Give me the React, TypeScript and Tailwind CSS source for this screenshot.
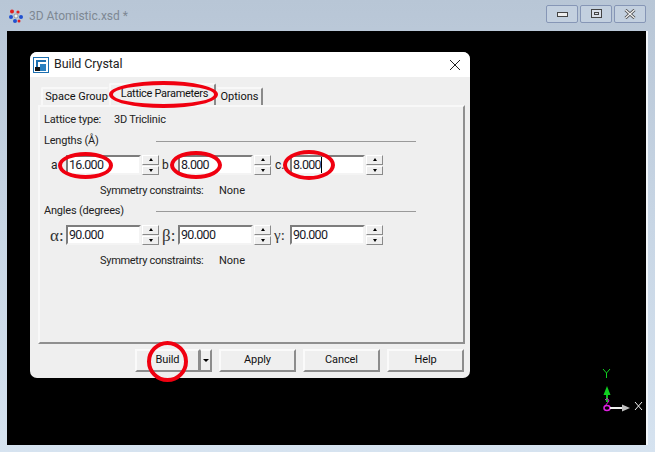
const font = "font-['Roboto','Liberation_Sans',Arial,sans-serif]";

function Spinner() {
  return (
    <div className="flex flex-col w-[17px] h-5 gap-px shrink-0 ml-px">
      <div className="flex-1 bg-[#efefef] border border-t-white border-l-white border-r-[#8a8a8a] border-b-[#8a8a8a] flex items-center justify-center">
        <div className="w-0 h-0 border-x-[2.5px] border-x-transparent border-b-[3px] border-b-black" />
      </div>
      <div className="flex-1 bg-[#efefef] border border-t-white border-l-white border-r-[#8a8a8a] border-b-[#8a8a8a] flex items-center justify-center">
        <div className="w-0 h-0 border-x-[2.5px] border-x-transparent border-t-[3px] border-t-black" />
      </div>
    </div>
  );
}

function Field({ value, caret }: { value: string; caret?: boolean }) {
  return (
    <div className="w-[75px] h-[20px] bg-white border-2 border-t-[#7d7d7d] border-l-[#7d7d7d] border-r-[#f4f4f4] border-b-[#f4f4f4] flex items-center pl-[1px] font-['Roboto',sans-serif] text-[12.5px] tracking-[-0.7px] text-[#1a1a2a] shrink-0">
      <span className={caret ? "border-r border-black leading-[16px]" : "leading-[16px]"}>{value}</span>
    </div>
  );
}

function Group({ title }: { title: string }) {
  return (
    <div className="flex items-center h-[14px]">
      <span className="w-[112px] text-[11px] tracking-[-0.2px] text-[#222] whitespace-nowrap">{title}</span>
      <div className="w-[260px] h-px bg-[#9a9a9a]" />
    </div>
  );
}

function Constraints() {
  return (
    <div className="flex text-[11px] text-[#222] pl-[56px] h-[14px] items-center whitespace-nowrap">
      <span className="w-[119px] tracking-[-0.3px]">Symmetry constraints:</span>
      <span>None</span>
    </div>
  );
}

function Btn({ label, w = "w-[77px]" }: { label: string; w?: string }) {
  return (
    <div className={`${w} h-[23px] bg-[#efefef] border-2 border-t-[#fafafa] border-l-[#fafafa] border-r-[#8c8c8c] border-b-[#8c8c8c] flex items-center justify-center text-[11px] tracking-[-0.1px] text-[#111]`}>
      {label}
    </div>
  );
}

function Ring({ className }: { className: string }) {
  return <div className={`absolute rounded-[50%] border-[4px] border-[#f00010] ${className}`} />;
}

export default function App() {
  return (
    <div className={`${font} relative w-[655px] h-[452px] overflow-hidden flex flex-col bg-gradient-to-b from-[#b8c6d6] via-[#c8d6e5] to-[#d6e3f0]`}>
      {/* title bar */}
      <div className="h-[31px] flex items-center pl-[8px] pr-[9px] shrink-0">
        <svg width="16" height="16" viewBox="0 0 16 16" className="mr-[5px]">
          <circle cx="4" cy="3.5" r="2" fill="#e02020" />
          <circle cx="10" cy="4" r="1.6" fill="#e02020" />
          <circle cx="3" cy="9" r="2" fill="#2050d0" />
          <circle cx="8" cy="8" r="2" fill="#f0f0f0" stroke="#666" strokeWidth="0.5" />
          <circle cx="13" cy="9" r="2" fill="#2050d0" />
          <circle cx="7" cy="13" r="2" fill="#2050d0" />
          <circle cx="11" cy="13" r="1.5" fill="#e02020" />
        </svg>
        <span className="text-[12px] text-[#7e8893]">3D Atomistic.xsd *</span>
        <div className="ml-auto flex gap-[2px] mb-[4px]">
          <div className="w-[32px] h-[18px] rounded-[2px] border border-[#8696b6] bg-[#c3d0df] flex items-center justify-center">
            <div className="w-[11px] h-[5px] mt-[2px] bg-[#eeeeee] border border-[#444]" />
          </div>
          <div className="w-[32px] h-[18px] rounded-[2px] border border-[#8696b6] bg-[#c3d0df] flex items-center justify-center">
            <div className="w-[11px] h-[9px] bg-[#d8dee8] border border-[#444] flex items-center justify-center">
              <div className="w-[5px] h-[3px] border border-[#444]" />
            </div>
          </div>
          <div className="w-[32px] h-[18px] rounded-[2px] border border-[#8696b6] bg-[#c3d0df] flex items-center justify-center">
            <svg width="12" height="10" viewBox="0 0 12 10">
              <path d="M1.5 1 L10.5 9 M10.5 1 L1.5 9" stroke="#444" strokeWidth="3" />
              <path d="M1.5 1 L10.5 9 M10.5 1 L1.5 9" stroke="#f2f2f2" strokeWidth="1.4" />
            </svg>
          </div>
        </div>
      </div>

      {/* client area */}
      <div className="mx-[7px] mb-[7px] flex-1 bg-black border-r-2 border-r-[#f2f6fa] relative pt-[21px] pl-[23px]">
        {/* dialog */}
        <div className="w-[440px] h-[326px] rounded-[7px] overflow-hidden flex flex-col bg-[#efefef]">
          <div className="h-[25px] bg-white flex items-center pl-[3px] pr-[9px] shrink-0">
            <svg width="16" height="16" viewBox="0 0 16 16" className="mr-[5px]">
              <rect x="0.5" y="0.5" width="15" height="15" fill="#fff" stroke="#1d6fb0" />
              <path d="M3 14 V3 H13 V5 H5 V14 Z" fill="#1d6fb0" />
              <path d="M7 14 V7 H13 V14 Z" fill="#2a80c0" />
              <rect x="2" y="10" width="5" height="4" fill="#111" />
            </svg>
            <span className="text-[12.5px] tracking-[-0.1px] text-[#222]">Build Crystal</span>
            <svg width="12" height="12" viewBox="0 0 12 12" className="ml-auto">
              <path d="M1 1 L11 11 M11 1 L1 11" stroke="#222" strokeWidth="1" />
            </svg>
          </div>

          {/* tabs */}
          <div className="flex items-end pl-[11px] h-[28px] text-[11px] text-[#111] shrink-0 whitespace-nowrap">
            <div className="w-[68px] h-[18px] bg-[#efefef] border-2 border-b-0 border-t-[#f8f8f8] border-l-[#f8f8f8] border-r-[#efefef] rounded-t-[2px] flex items-center justify-center pl-[3px]">Space Group</div>
            <div className="w-[107px] h-[22px] bg-[#efefef] border-2 border-b-0 border-t-[#f8f8f8] border-l-[#f8f8f8] border-r-[#8a8a8a] rounded-t-[2px] flex items-center justify-center pb-[2px] pl-[4px] tracking-[-0.3px]">Lattice Parameters</div>
            <div className="w-[47px] h-[18px] bg-[#efefef] border-2 border-b-0 border-t-[#f8f8f8] border-r-[#8a8a8a] border-l-transparent rounded-t-[2px] flex items-center justify-center">Options</div>
          </div>

          {/* tab panel */}
          <div className="ml-[8px] mr-[5px] h-[239px] border-2 border-t-[#f8f8f8] border-l-[#f8f8f8] border-r-[#8f8f8f] border-b-[#8f8f8f] pl-[4px] pt-[6px] shrink-0">
            <div className="flex text-[11px] tracking-[-0.2px] text-[#222] h-[14px] items-center whitespace-nowrap">
              <span className="w-[70px]">Lattice type:</span>
              <span>3D Triclinic</span>
            </div>
            <div className="mt-[7px]">
              <Group title="Lengths (Å)" />
            </div>
            <div className="flex items-center h-[20px] mt-[7px] text-[12px] text-[#222]">
              <span className="w-[22px] pl-[7px] shrink-0">a</span>
              <Field value="16.000" />
              <Spinner />
              <span className="w-[19px] pl-[3px]">b</span>
              <Field value="8.000" />
              <Spinner />
              <span className="w-[19px] pl-[4px]">c.</span>
              <Field value="8.000" caret />
              <Spinner />
            </div>
            <div className="mt-[9px]">
              <Constraints />
            </div>
            <div className="mt-[6px]">
              <Group title="Angles (degrees)" />
            </div>
            <div className="flex items-center h-[20px] mt-[7px] text-[#333] font-['Liberation_Serif',serif]">
              <span className="w-[22px] pl-[6px] text-[17px] shrink-0 leading-none font-normal">α:</span>
              <Field value="90.000" />
              <Spinner />
              <span className="w-[19px] pl-[3px] text-[17px] leading-none font-normal">β:</span>
              <Field value="90.000" />
              <Spinner />
              <span className="w-[19px] pl-[3px] text-[15px] leading-none font-normal">γ:</span>
              <Field value="90.000" />
              <Spinner />
            </div>
            <div className="mt-[9px]">
              <Constraints />
            </div>
          </div>

          {/* footer buttons */}
          <div className="flex items-center pl-[105px] mt-[5px] gap-[7px]">
            <div className="flex">
              <Btn label="Build" w="w-[65px]" />
              <div className="w-[12px] h-[23px] bg-[#efefef] border-2 border-t-[#fafafa] border-l-[#8c8c8c] border-l-[1px] border-r-[#8c8c8c] border-b-[#8c8c8c] flex items-center justify-center">
                <div className="w-0 h-0 border-x-[3px] border-x-transparent border-t-[3px] border-t-black" />
              </div>
            </div>
            <Btn label="Apply" />
            <Btn label="Cancel" />
            <Btn label="Help" />
          </div>
        </div>

        {/* axis triad */}
        <svg width="50" height="55" viewBox="0 0 50 55" className="absolute left-[594px] top-[338px]">
          <path d="M2 0 L5.5 4 L9 0 M5.5 4 V9" stroke="#10d020" fill="none" />
          <rect x="5" y="20" width="2" height="13" fill="#10c020" />
          <path d="M2.5 26 L6 17 L9.5 26 Z" fill="#10d020" />
          <path d="M4 31 Q7 28 8 32 L4 37" stroke="#e020e0" fill="none" />
          <ellipse cx="6" cy="39" rx="3" ry="2.5" fill="none" stroke="#e020e0" strokeWidth="1.5" />
          <rect x="9" y="38" width="14" height="2" fill="#f0f0f0" />
          <path d="M21 35.5 L29 39 L21 42.5 Z" fill="#c0c0c0" />
          <path d="M34 33 L41 41 M41 33 L34 41" stroke="#f0f0f0" fill="none" />
        </svg>
      </div>

      {/* red annotation rings */}
      <Ring className="left-[109px] top-[81px] w-[109px] h-[27px]" />
      <Ring className="left-[58px] top-[152px] w-[55px] h-[27px]" />
      <Ring className="left-[170px] top-[151px] w-[52px] h-[28px]" />
      <Ring className="left-[283px] top-[150px] w-[52px] h-[30px]" />
      <Ring className="left-[147px] top-[341px] w-[41px] h-[41px]" />
    </div>
  );
}
